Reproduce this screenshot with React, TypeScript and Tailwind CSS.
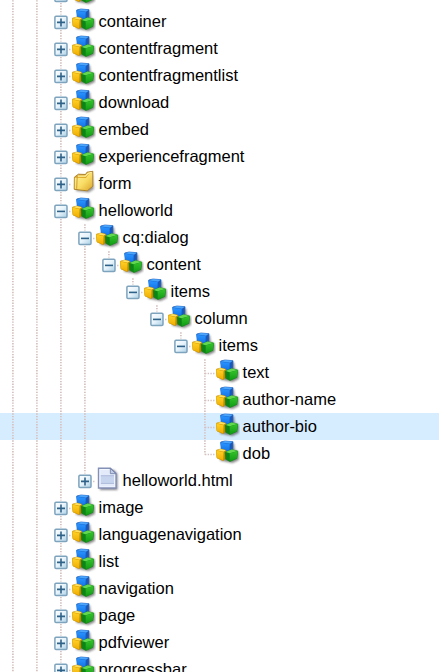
import React from "react";

type Kind = "cubes" | "folder" | "file";
type Toggle = "plus" | "minus" | "none";
type Row = { label: string; guides: string; toggle: Toggle; kind?: Kind; selected?: boolean };

// One letter per tree column: v = line, s = blank, t = branch, e = last branch.
const rows: Row[] = [
  { label: "carousel", guides: "vvt", toggle: "plus" },
  { label: "container", guides: "vvt", toggle: "plus" },
  { label: "contentfragment", guides: "vvt", toggle: "plus" },
  { label: "contentfragmentlist", guides: "vvt", toggle: "plus" },
  { label: "download", guides: "vvt", toggle: "plus" },
  { label: "embed", guides: "vvt", toggle: "plus" },
  { label: "experiencefragment", guides: "vvt", toggle: "plus" },
  { label: "form", guides: "vvt", toggle: "plus", kind: "folder" },
  { label: "helloworld", guides: "vvt", toggle: "minus" },
  { label: "cq:dialog", guides: "vvvt", toggle: "minus" },
  { label: "content", guides: "vvvve", toggle: "minus" },
  { label: "items", guides: "vvvvse", toggle: "minus" },
  { label: "column", guides: "vvvvsse", toggle: "minus" },
  { label: "items", guides: "vvvvssse", toggle: "minus" },
  { label: "text", guides: "vvvvsssst", toggle: "none" },
  { label: "author-name", guides: "vvvvsssst", toggle: "none" },
  { label: "author-bio", guides: "vvvvsssst", toggle: "none", selected: true },
  { label: "dob", guides: "vvvvsssse", toggle: "none" },
  { label: "helloworld.html", guides: "vvve", toggle: "plus", kind: "file" },
  { label: "image", guides: "vvt", toggle: "plus" },
  { label: "languagenavigation", guides: "vvt", toggle: "plus" },
  { label: "list", guides: "vvt", toggle: "plus" },
  { label: "navigation", guides: "vvt", toggle: "plus" },
  { label: "page", guides: "vvt", toggle: "plus" },
  { label: "pdfviewer", guides: "vvt", toggle: "plus" },
  { label: "progressbar", guides: "vvt", toggle: "plus" },
];

function Guide({ type, toggle }: { type: string; toggle: Toggle }) {
  const branch = type === "t" || type === "e";
  return (
    <svg width="24" height="27" viewBox="0 0 24 27" className="shrink-0">
      {type !== "s" && (
        <path d={type === "e" ? "M12.9 .3V14.5" : "M12.9 .3V27"} stroke="#d6c0c0" strokeWidth="1.7" strokeDasharray="1.35 1.35" />
      )}
      {branch && <path d="M13 14.5H23.5" stroke="#d6c0c0" strokeWidth="1.5" strokeDasharray="1.35 1.35" />}
      {branch && toggle !== "none" && (
        <g>
          <rect x="5" y="6.5" width="15.5" height="15.5" fill="#fff" />
          <rect x="6.9" y="8.3" width="12.1" height="12.1" rx="1.1" fill="url(#boxFill)" stroke="#7da3bd" strokeWidth="1.5" />
          <path d={toggle === "plus" ? "M9 14.4H17M13 10.4V18.4" : "M9 14.4H17"} stroke="#2f6288" strokeWidth="1.6" />
        </g>
      )}
    </svg>
  );
}

function NodeIcon({ kind = "cubes" }: { kind?: Kind }) {
  return (
    <svg width="24" height="27" viewBox="0 0 24 27" className="shrink-0">
      {kind === "cubes" && (
        <g strokeLinejoin="round" strokeWidth=".7">
          <path d="M8 4L18 3.5L18.7 10L22.8 12V20L16.5 23L4 20.5Z" fill="#222" opacity=".55" filter="url(#soft)" />
          <path d="M4.7 2L9 1L17 1.7L16.6 9.6L13.2 11.7L5.5 10.4Z" fill="#1a58ba" stroke="#1a58ba" />
          <path d="M4.7 2.4L9 1L17 1.7L13.9 3.7Z" fill="#4ba6fb" />
          <path d="M4.6 2.7L13.7 3.9L13.1 11.5L5.5 10.3Z" fill="url(#blueFace)" stroke="#1b7fee" strokeWidth=".4" />
          <path d="M.4 10.2L4.8 9L9.7 10.2L9.4 18.6L7 20.6L1 17.9Z" fill="#c28900" stroke="#c28900" />
          <path d="M.4 10.2L4.8 8.9L9.7 10.2L7.6 11.7Z" fill="#ffe263" />
          <path d="M.3 10.5L7.5 11.9L7 20.3L1 17.8Z" fill="url(#goldFace)" stroke="#edb000" strokeWidth=".4" />
          <path d="M9.4 12.2L15.6 9.7L21.7 11.1L20.8 18.4L14 21.5L9.7 19.2Z" fill="#139018" stroke="#138718" />
          <path d="M9.5 12L15.6 9.6L21.7 10.9L13.6 13.3Z" fill="#63d750" />
          <path d="M13.6 13.4L21.6 11.2L20.7 18.3L13.8 21.3Z" fill="url(#greenFace)" />
          <path d="M9.4 12.3L13.4 13.5L13.5 21.2L9.8 19Z" fill="#0f8416" />
        </g>
      )}
      {kind === "folder" && (
        <g strokeLinejoin="round">
          <path d="M4 7L20.5 4L22 19L17 22.5L4 21Z" fill="#333" opacity=".5" filter="url(#soft)" />
          <path d="M2.4 7.2L6.4 4.2L13.5 4.5L15 2.2L20.8 1.3V16.2L15.3 20.8L2.2 19.3Z" fill="#dda927" stroke="#a87b24" strokeWidth=".9" />
          <path d="M2.8 7.7L13.9 7.9L16.4 4.4L20.2 2.5V15.9L15 20.2L2.8 18.8Z" fill="url(#folderFace)" />
          <path d="M5.7 6.1L13.5 6.2L16 3.4L19.8 2.4" fill="none" stroke="#fff4a6" strokeWidth="1.2" />
          <path d="M5.2 6.5L4.7 18.8" stroke="#c9952a" strokeWidth=".9" />
        </g>
      )}
      {kind === "file" && (
        <g>
          <path d="M4 3H18L21.5 7V23H4Z" fill="#334" opacity=".6" filter="url(#soft)" />
          <path d="M2.5 1.3H14.4L20 6.5V21H2.5Z" fill="#f3f7ff" stroke="#8490b5" strokeWidth="1.4" />
          <path d="M4.3 3H13.5V7.3H18.4V19.6H4.3Z" fill="#e3ebfb" />
          <path d="M14.3 1.4V6.7H19.9Z" fill="#c2cce5" stroke="#7382aa" strokeWidth=".9" />
          <rect x="4.8" y="9.3" width="13.2" height="6.4" fill="#c6d4ee" />
          <path d="M4.8 8.8H18M4.8 16.3H18" stroke="#9eadd0" strokeWidth=".9" />
        </g>
      )}
    </svg>
  );
}

export default function App() {
  return (
    <main className="h-[672px] w-full overflow-hidden bg-white font-['Liberation_Sans',Arial,sans-serif] text-[16.5px] text-black">
      <svg width="0" height="0" className="absolute">
        <defs>
          <filter id="soft" x="-20%" y="-20%" width="140%" height="140%"><feGaussianBlur stdDeviation=".9" /></filter>
          <linearGradient id="boxFill" x2="1" y2="1"><stop stopColor="#fff" /><stop offset=".5" stopColor="#e6f3fb" /><stop offset="1" stopColor="#acd0e6" /></linearGradient>
          <linearGradient id="blueFace" x2="0" y2="1"><stop stopColor="#2b95ff" /><stop offset="1" stopColor="#1272e6" /></linearGradient>
          <linearGradient id="goldFace" x2="0" y2="1"><stop stopColor="#ffd22a" /><stop offset="1" stopColor="#efad00" /></linearGradient>
          <linearGradient id="greenFace" x2="0" y2="1"><stop stopColor="#35c32b" /><stop offset="1" stopColor="#109b14" /></linearGradient>
          <linearGradient id="folderFace" x2="1" y2="1"><stop stopColor="#fff5a0" /><stop offset=".55" stopColor="#f9dc65" /><stop offset="1" stopColor="#dba62a" /></linearGradient>
        </defs>
      </svg>
      <ul className="-mt-[19px]">
        {rows.map((row, i) => (
          <li key={i} className={`flex h-[27px] items-center ${row.selected ? "bg-[#d6ecff]" : ""}`}>
            {row.guides.split("").map((type, j) => (
              <Guide key={j} type={type} toggle={row.toggle} />
            ))}
            <NodeIcon kind={row.kind} />
            <span className="ml-[2.6px] whitespace-nowrap leading-[27px]">{row.label}</span>
          </li>
        ))}
      </ul>
    </main>
  );
}
